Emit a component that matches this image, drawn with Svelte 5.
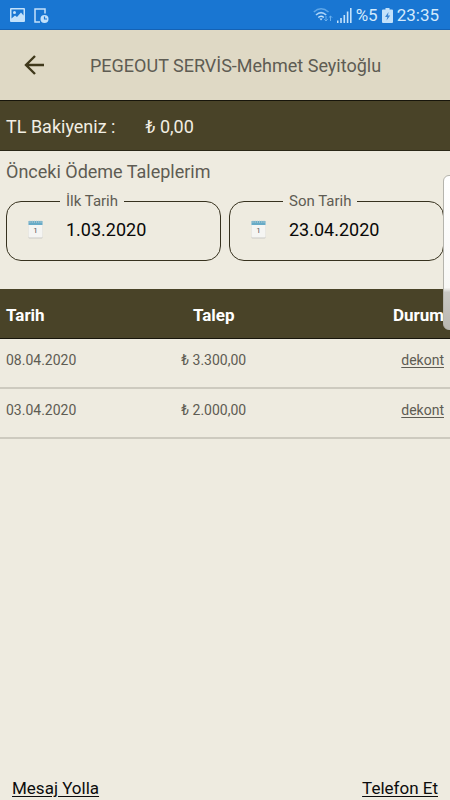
<script>
  const requests = [
    { date: '08.04.2020', amount: '₺ 3.300,00' },
    { date: '03.04.2020', amount: '₺ 2.000,00' }
  ];
  let dates = $state([
    { id: 'first-date', label: 'İlk Tarih', value: '1.03.2020' },
    { id: 'last-date', label: 'Son Tarih', value: '23.04.2020' }
  ]);
</script>

<div class="screen">
  <div class="status">
    <div class="group">
      <svg width="15" height="15" viewBox="0 0 15 15" aria-hidden="true">
        <path fill-rule="evenodd" fill="#c3e1fa" d="M1 0h13a1 1 0 0 1 1 1v12a1 1 0 0 1-1 1H1a1 1 0 0 1-1-1V1a1 1 0 0 1 1-1zM1.500 1.500v9L5 7.500l2 1.500 4-4.500 2.500 3V1.500z" />
        <circle cx="4.500" cy="4.500" r="1.500" fill="#c3e1fa" />
      </svg>
      <svg width="15" height="15" viewBox="0 0 15 15" fill="none" aria-hidden="true">
        <path d="M11 5.500V1H1v13h5" stroke="#c3e1fa" stroke-width="1.500" />
        <circle cx="10.500" cy="11" r="4" fill="#c3e1fa" />
        <path d="M10.500 8.500V11H13" stroke="#1976d2" stroke-width="1.200" />
      </svg>
    </div>
    <div class="group right">
      <svg width="20" height="16" viewBox="0 0 20 16" fill="none" aria-hidden="true">
        <g stroke-width="1.600">
          <path d="M.8 5Q8 -1.500 15.500 5" stroke="#5ea6e8" />
          <path d="M3 8Q8 3.200 13.200 8" stroke="#a9d2f8" />
          <path d="M5.300 10.500Q8 8 10.800 10.500" stroke="#c3e1fa" />
        </g>
        <path d="M6.500 11.500h3.200L8 13.500z" fill="#c3e1fa" />
        <path d="M13 9v5m-1.700-1.700L13 14l1.700-1.700M17.500 14V9m-1.700 1.700L17.500 9l1.700 1.700" stroke="#69afee" />
      </svg>
      <svg width="15" height="15" viewBox="0 0 15 15" fill="#c3e1fa" aria-hidden="true">
        <path d="M0 12.500h1.500V15H0zM3.200 10h1.600v5H3.200zM6.500 7h1.600v8H6.500zM9.800 3.500h1.600V15H9.800zM13 0h1.600v15H13z" />
      </svg>
      <span>%5</span>
      <svg width="11" height="15" viewBox="0 0 11 15" aria-hidden="true">
        <path d="M3.500 0h4v1.500H10a1 1 0 0 1 1 1V14a1 1 0 0 1-1 1H1a1 1 0 0 1-1-1V2.500a1 1 0 0 1 1-1h2.500z" fill="#c3e1fa" />
        <path d="M6.500 4L3 9h2.300L4.500 12.500l3.700-5H6z" fill="#3d87d4" />
      </svg>
      <time>23:35</time>
    </div>
  </div>

  <header>
    <button class="back" aria-label="Geri">
      <svg width="20" height="20" viewBox="0 0 20 20" fill="none" stroke="#40391c" stroke-width="2.400" aria-hidden="true">
        <path d="M20 10H2M11 1l-9 9 9 9" />
      </svg>
    </button>
    <h1>PEGEOUT SERVİS-Mehmet Seyitoğlu</h1>
  </header>

  <div class="balance">
    <span>TL Bakiyeniz :</span>
    <span>₺ 0,00</span>
  </div>

  <main>
    <h2>Önceki Ödeme Taleplerim</h2>
    <div class="filters">
      {#each dates as field}
        <fieldset>
          <legend><label for={field.id}>{field.label}</label></legend>
          <div class="date">
            <svg width="15" height="19" viewBox="0 0 15 19" aria-hidden="true">
              <rect x=".5" y="2" width="14" height="16.500" rx="1" fill="#c9c9c5" />
              <rect x=".5" y="1.500" width="14" height="16" rx="1" fill="#f5f5f3" />
              <path d="M.5 1h14v4H.5z" fill="#67abc7" />
              <path d="M2 .5V3M4.200 .5V3M6.400 .5V3M8.600 .5V3M10.800 .5V3M13 .5V3" stroke="#b4cdd5" stroke-width=".8" />
              <text x="7.500" y="13" text-anchor="middle" font-size="8" fill="#55555a">1</text>
            </svg>
            <input id={field.id} type="text" bind:value={field.value} />
          </div>
        </fieldset>
      {/each}
    </div>

    <table>
      <thead>
        <tr><th>Tarih</th><th>Talep</th><th>Durum</th></tr>
      </thead>
      <tbody>
        {#each requests as request}
          <tr>
            <td>{request.date}</td>
            <td>{request.amount}</td>
            <td><a href="#dekont">dekont</a></td>
          </tr>
        {/each}
      </tbody>
    </table>
  </main>

  <footer>
    <a href="#mesaj">Mesaj Yolla</a>
    <a href="#telefon">Telefon Et</a>
  </footer>
  <div class="edge-handle"></div>
</div>

<style>
  .screen {
    position: relative;
    display: flex;
    flex-direction: column;
    min-height: 100vh;
    overflow: hidden;
    background: #eeebe0;
    color: #5e5c53;
    font-family: Roboto, "Liberation Sans", sans-serif;
    font-size: 18px;
  }

  .status {
    display: flex;
    align-items: center;
    justify-content: space-between;
    box-sizing: border-box;
    height: 30px;
    padding: 1px 11px 0 10px;
    border-bottom: 1px solid #1462b5;
    background: #1976d2;
    color: #d3eafc;
    font-size: 17px;
  }

  .group {
    display: flex;
    align-items: center;
    gap: 9px;
  }

  .right {
    gap: 4px;
  }

  header {
    display: flex;
    align-items: center;
    height: 70px;
    padding: 0 24px;
    gap: 46px;
    background: #dfd9c5;
  }

  .back {
    display: flex;
    padding: 0;
    border: 0;
    background: none;
  }

  h1,
  h2 {
    margin: 0;
    font-size: 18px;
    font-weight: 400;
  }

  .balance {
    display: flex;
    align-items: center;
    box-sizing: border-box;
    height: 51px;
    padding: 2px 6px 0;
    gap: 30px;
    border-top: 1px solid #17150b;
    border-bottom: 1px solid #2b2818;
    background: #494328;
    color: #f1eee3;
  }

  main {
    flex: 1;
  }

  h2 {
    padding: 8px 6px;
    line-height: 26px;
  }

  .filters {
    display: flex;
    gap: 8px;
    padding: 0 6px 28px;
  }

  fieldset {
    flex: 1;
    box-sizing: border-box;
    min-width: 0;
    height: 68px;
    margin: 0;
    padding: 0 21px;
    border: 1px solid #37321f;
    border-radius: 15px;
  }

  legend {
    margin-left: 32px;
    padding: 0 6px;
    font-size: 15px;
    line-height: 16px;
  }

  .date {
    display: flex;
    align-items: center;
    gap: 23px;
    padding-top: 7px;
  }

  input {
    flex: 1;
    min-width: 0;
    height: 26px;
    padding: 0;
    border: 0;
    background: none;
    color: #080808;
    font: inherit;
  }

  table {
    width: 100%;
    table-layout: fixed;
    border-collapse: separate;
    border-spacing: 0;
    font-size: 14px;
  }

  th,
  td {
    box-sizing: border-box;
    height: 50px;
    padding: 0 6px;
    text-align: center;
  }

  th {
    width: 31%;
    padding-top: 2px;
    border-bottom: 1px solid #17150b;
    background: #494328;
    color: #fff;
    font-size: 17px;
  }

  td {
    padding-bottom: 6px;
    border-bottom: 2px solid #cdcabf;
  }

  th:first-child,
  td:first-child {
    width: 32%;
    text-align: left;
  }

  th:last-child,
  td:last-child {
    width: 37%;
    text-align: right;
  }

  a {
    color: inherit;
    text-underline-offset: 2px;
  }

  footer {
    display: flex;
    justify-content: space-between;
    padding: 0 12px;
    color: #0c0c0c;
    font-size: 17px;
    line-height: 24px;
  }

  .edge-handle {
    position: absolute;
    top: 175px;
    right: -8px;
    box-sizing: border-box;
    width: 15px;
    height: 155px;
    border: 1px solid #b5b4ad;
    border-radius: 6px;
    background: linear-gradient(#fff, #f8f8f6 73%, #c9c8c4 76%, #b9b7b0);
  }
</style>
